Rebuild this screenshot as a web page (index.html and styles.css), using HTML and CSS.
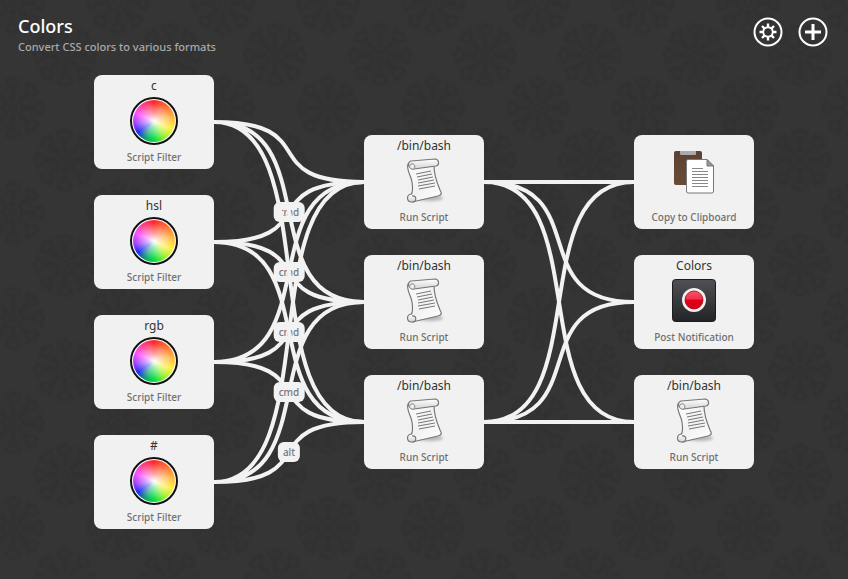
FILE: index.html
```
<!DOCTYPE html>
<html lang="en">
<head>
<meta charset="utf-8">
<title>Colors</title>
<link rel="stylesheet" href="styles.css">
</head>
<body>
<svg class="defs" aria-hidden="true">
  <defs>
    <linearGradient id="paper" x1="0" y1="0" x2="1" y2="1">
      <stop offset="0" stop-color="#fff"/><stop offset=".5" stop-color="#f2f2f2"/><stop offset="1" stop-color="#fff"/>
    </linearGradient>
    <linearGradient id="roll" x1="0" y1="0" x2="0" y2="1">
      <stop offset="0" stop-color="#fff"/><stop offset="1" stop-color="#d4d4d4"/>
    </linearGradient>
    <linearGradient id="board" x1="0" y1="0" x2="0" y2="1">
      <stop offset="0" stop-color="#5a4334"/><stop offset="1" stop-color="#6a4a36"/>
    </linearGradient>
    <linearGradient id="slate" x1="0" y1="0" x2="0" y2="1">
      <stop offset="0" stop-color="#505154"/><stop offset="1" stop-color="#232427"/>
    </linearGradient>
    <linearGradient id="red" x1="0" y1="0" x2="0" y2="1">
      <stop offset="0" stop-color="#f8556a"/><stop offset=".45" stop-color="#f0304a"/><stop offset=".5" stop-color="#e00018"/><stop offset="1" stop-color="#d80014"/>
    </linearGradient>
    <filter id="soft" x="-30%" y="-100%" width="160%" height="300%"><feGaussianBlur stdDeviation="1.5"/></filter>
    <symbol id="script" viewBox="0 0 48 48">
      <ellipse cx="30" cy="41" rx="13" ry="3" fill="#000" opacity=".25" filter="url(#soft)"/>
      <path d="M8 7C6 13 11 18 12 25C13 31 13 35 11 38L12 45L38 39C42 38 42 36 40 33C37 26 34 19 34 9L13 11Z" fill="url(#paper)" stroke="#777" stroke-width="1.200" stroke-linejoin="round"/>
      <path d="M11 4L35 2C39 2 40 8 36 9L14 12C9 12 6 6 11 4Z" fill="url(#roll)" stroke="#777" stroke-width="1.200" stroke-linejoin="round"/>
      <path d="M14 12C16 9 14 6 11 7C8 9 10 13 14 12Z" fill="#eee" stroke="#888"/>
      <path d="M12 37C6 37 6 45 12 45C17 45 17 38 12 39" fill="url(#roll)" stroke="#777" stroke-width="1.200" stroke-linejoin="round"/>
      <path d="M16 17l15-3M17 20l15-3M18 23l15-3M18 26l16-3M18 29l17-3M19 32l16-3" stroke="#777"/>
    </symbol>
    <symbol id="clipboard" viewBox="0 0 48 48">
      <path d="M3 36H20" stroke="#000" stroke-width="3" opacity=".4" filter="url(#soft)"/>
      <path d="M16 44H44" stroke="#000" stroke-width="3" opacity=".4" filter="url(#soft)"/>
      <rect x="4" y="2" width="28" height="34" rx="2" fill="url(#board)"/>
      <path d="M10 2H26V5Q26 6 25 6H11Q10 6 10 5Z" fill="#aaa"/>
      <path d="M18 10.500H37L43.500 17V42Q43.500 44 42 44H18Q16.500 44 16.500 42V12Q16.500 10.500 18 10.500Z" fill="#fff" stroke="#777"/>
      <path d="M37 10.500V17H43.500Z" fill="#999" stroke="#777"/>
      <path d="M22 19.500H33M22 22.500H38M22 25.500H38M22 28.500H38M22 31.500H38M22 34.500H38M22 37.500H38" stroke="#888"/>
    </symbol>
    <symbol id="notify" viewBox="0 0 48 48">
      <rect x="2.500" y="2.500" width="43" height="42" rx="3" fill="url(#slate)" stroke="#1c1c1e"/>
      <circle cx="24" cy="23" r="12" fill="#f4f0f0"/>
      <circle cx="24" cy="23" r="9" fill="url(#red)" stroke="#a00010" stroke-width=".8"/>
    </symbol>
  </defs>
</svg>

<main class="editor">
  <svg class="texture" aria-hidden="true">
    <defs>
      <path id="petal" d="M0-10q-4-4 0-8q4 4 0 8M0-21q-6-1-7-7q4 1 7-3q3 4 7 3q-1 6-7 7"/>
      <g id="medallion" fill="none" stroke="#282828" stroke-width="2">
        <circle r="4"/><circle r="9"/><circle r="19" stroke-dasharray="2 2"/>
        <use href="#petal"/><use href="#petal" transform="rotate(45)"/><use href="#petal" transform="rotate(90)"/><use href="#petal" transform="rotate(135)"/>
        <use href="#petal" transform="rotate(180)"/><use href="#petal" transform="rotate(225)"/><use href="#petal" transform="rotate(270)"/><use href="#petal" transform="rotate(315)"/>
      </g>
      <pattern id="damask" width="105" height="105" patternUnits="userSpaceOnUse">
        <use href="#medallion" x="13" y="3"/><use href="#medallion" x="118" y="3"/><use href="#medallion" x="13" y="108"/><use href="#medallion" x="118" y="108"/>
        <use href="#medallion" x="65" y="55"/>
      </pattern>
      <filter id="haze"><feGaussianBlur stdDeviation="1"/></filter>
    </defs>
    <rect width="100%" height="100%" fill="url(#damask)" filter="url(#haze)"/>
  </svg>

  <header class="bar">
    <div>
      <h1 class="title">Colors</h1>
      <p class="subtitle">Convert CSS colors to various formats</p>
    </div>
    <div class="actions">
      <button class="action" type="button" aria-label="Settings">
        <svg viewBox="0 0 30 30"><circle cx="15" cy="15" r="13.500" fill="none" stroke="#fff" stroke-width="2"/><circle cx="15" cy="15" r="4.800" fill="none" stroke="#fff" stroke-width="2"/><path d="M15 6.500V10M15 20v3.500M6.500 15H10M20 15h3.500M9 9l2.400 2.400M18.600 18.600L21 21M21 9l-2.400 2.400M11.400 18.600L9 21" stroke="#fff" stroke-width="2.400"/></svg>
      </button>
      <button class="action" type="button" aria-label="Add">
        <svg viewBox="0 0 30 30"><circle cx="15" cy="15" r="13.500" fill="none" stroke="#fff" stroke-width="2"/><path d="M15 7V23M7 15H23" stroke="#fff" stroke-width="3"/></svg>
      </button>
    </div>
  </header>

  <section class="canvas" aria-label="Workflow">
    <svg class="wires" aria-hidden="true">
      <path d="M214 482C326 482 252 182 364 182M214 482C326 482 252 302 364 302M214 482C326 482 252 422 364 422"/>
      <path d="M214 362C326 362 252 182 364 182M214 362C326 362 252 302 364 302M214 362C326 362 252 422 364 422"/>
      <path d="M214 242C326 242 252 182 364 182M214 242C326 242 252 302 364 302"/>
      <path d="M484 182H634M484 182C596 182 522 302 634 302M484 182C596 182 522 422 634 422"/>
      <path d="M484 422H634M484 422C596 422 522 302 634 302M484 422C596 422 522 182 634 182"/>
    </svg>
    <span class="key k212">cmd</span>
    <span class="key k272">cmd</span>
    <svg class="wires" aria-hidden="true">
      <path d="M214 122C326 122 252 182 364 182M214 122C326 122 252 302 364 302M214 122C326 122 252 422 364 422"/>
    </svg>
    <span class="key k332">cmd</span>
    <svg class="wires" aria-hidden="true">
      <path d="M214 242C326 242 252 422 364 422"/>
    </svg>
    <span class="key k392">cmd</span>
    <span class="key k452">alt</span>

    <article class="node col1 y75"><h2 class="name">c</h2><span class="wheel"></span><p class="kind">Script Filter</p></article>
    <article class="node col1 y195"><h2 class="name">hsl</h2><span class="wheel"></span><p class="kind">Script Filter</p></article>
    <article class="node col1 y315"><h2 class="name">rgb</h2><span class="wheel"></span><p class="kind">Script Filter</p></article>
    <article class="node col1 y435"><h2 class="name">#</h2><span class="wheel"></span><p class="kind">Script Filter</p></article>

    <article class="node col2 y135"><h2 class="name">/bin/bash</h2><svg class="icon"><use href="#script"/></svg><p class="kind">Run Script</p></article>
    <article class="node col2 y255"><h2 class="name">/bin/bash</h2><svg class="icon"><use href="#script"/></svg><p class="kind">Run Script</p></article>
    <article class="node col2 y375"><h2 class="name">/bin/bash</h2><svg class="icon"><use href="#script"/></svg><p class="kind">Run Script</p></article>

    <article class="node untitled col3 y135"><svg class="icon"><use href="#clipboard"/></svg><p class="kind">Copy to Clipboard</p></article>
    <article class="node col3 y255"><h2 class="name">Colors</h2><svg class="icon"><use href="#notify"/></svg><p class="kind">Post Notification</p></article>
    <article class="node col3 y375"><h2 class="name">/bin/bash</h2><svg class="icon"><use href="#script"/></svg><p class="kind">Run Script</p></article>
  </section>
</main>
</body>
</html>
```
FILE: styles.css
```
* { box-sizing: border-box; }
body { margin: 0; background: #353535; font-family: "Noto Sans", sans-serif; }
h1, h2, p { margin: 0; }
.defs { position: absolute; width: 0; height: 0; }

.editor { position: relative; min-height: 100vh; overflow: hidden; }
.texture { position: absolute; inset: 0; width: 100%; height: 100%; opacity: 0.35; }

.bar { position: relative; z-index: 1; display: flex; justify-content: space-between; align-items: flex-start; padding: 15px 20px 0 18px; }
.title { color: #fff; font-size: 18px; font-weight: 500; line-height: 23px; }
.subtitle { color: #a9a9a9; font-size: 11px; font-weight: 500; line-height: 18px; }
.actions { display: flex; gap: 15px; padding-top: 2px; }
.action { width: 30px; height: 30px; padding: 0; border: 0; background: none; cursor: pointer; }
.action svg { display: block; width: 30px; height: 30px; }

.canvas { position: absolute; inset: 0; }
.wires { position: absolute; inset: 0; width: 100%; height: 100%; fill: none; stroke: #f2f2f2; stroke-width: 4; }

.node {
  position: absolute;
  display: flex;
  flex-direction: column;
  align-items: center;
  width: 120px;
  height: 94px;
  padding-top: 2px;
  border-radius: 8px;
  background: #f1f1f1;
  text-align: center;
}
.untitled { justify-content: space-between; padding: 14px 0 4px; }
.col1 { left: 94px; }
.col2 { left: 364px; }
.col3 { left: 634px; }
.y75 { top: 75px; }
.y135 { top: 135px; }
.y195 { top: 195px; }
.y255 { top: 255px; }
.y315 { top: 315px; }
.y375 { top: 375px; }
.y435 { top: 435px; }

.name { height: 20px; color: #333; font-size: 12px; font-weight: 400; line-height: 18px; }
.kind { margin-top: 4px; color: #707070; font-size: 10px; font-weight: 500; line-height: 16px; }
.icon { width: 48px; height: 48px; }
.wheel {
  width: 48px;
  height: 48px;
  border: 2px solid #111;
  border-radius: 50%;
  padding: 1px;
  background:
    radial-gradient(circle closest-side, #fff 0, rgba(255, 255, 255, 0.6) 30%, rgba(255, 255, 255, 0) 90%) content-box,
    conic-gradient(#ff2828, #ff7430 45deg, #ffb040 75deg, #fff040 115deg, #a0f030 145deg, #00e040 180deg, #10a070 208deg, #2030f0 235deg, #a040ff 262deg, #ff50ff 295deg, #ff4090 325deg, #ff2828) content-box,
    #fff;
}

.key {
  position: absolute;
  left: 289px;
  padding: 0 5px;
  border-radius: 6px;
  background: #f2f2f2;
  color: #777;
  font-size: 10px;
  font-weight: 500;
  line-height: 20px;
  transform: translateX(-50%);
}
.k212 { top: 202px; }
.k272 { top: 262px; }
.k332 { top: 322px; }
.k392 { top: 382px; }
.k452 { top: 442px; }
```
